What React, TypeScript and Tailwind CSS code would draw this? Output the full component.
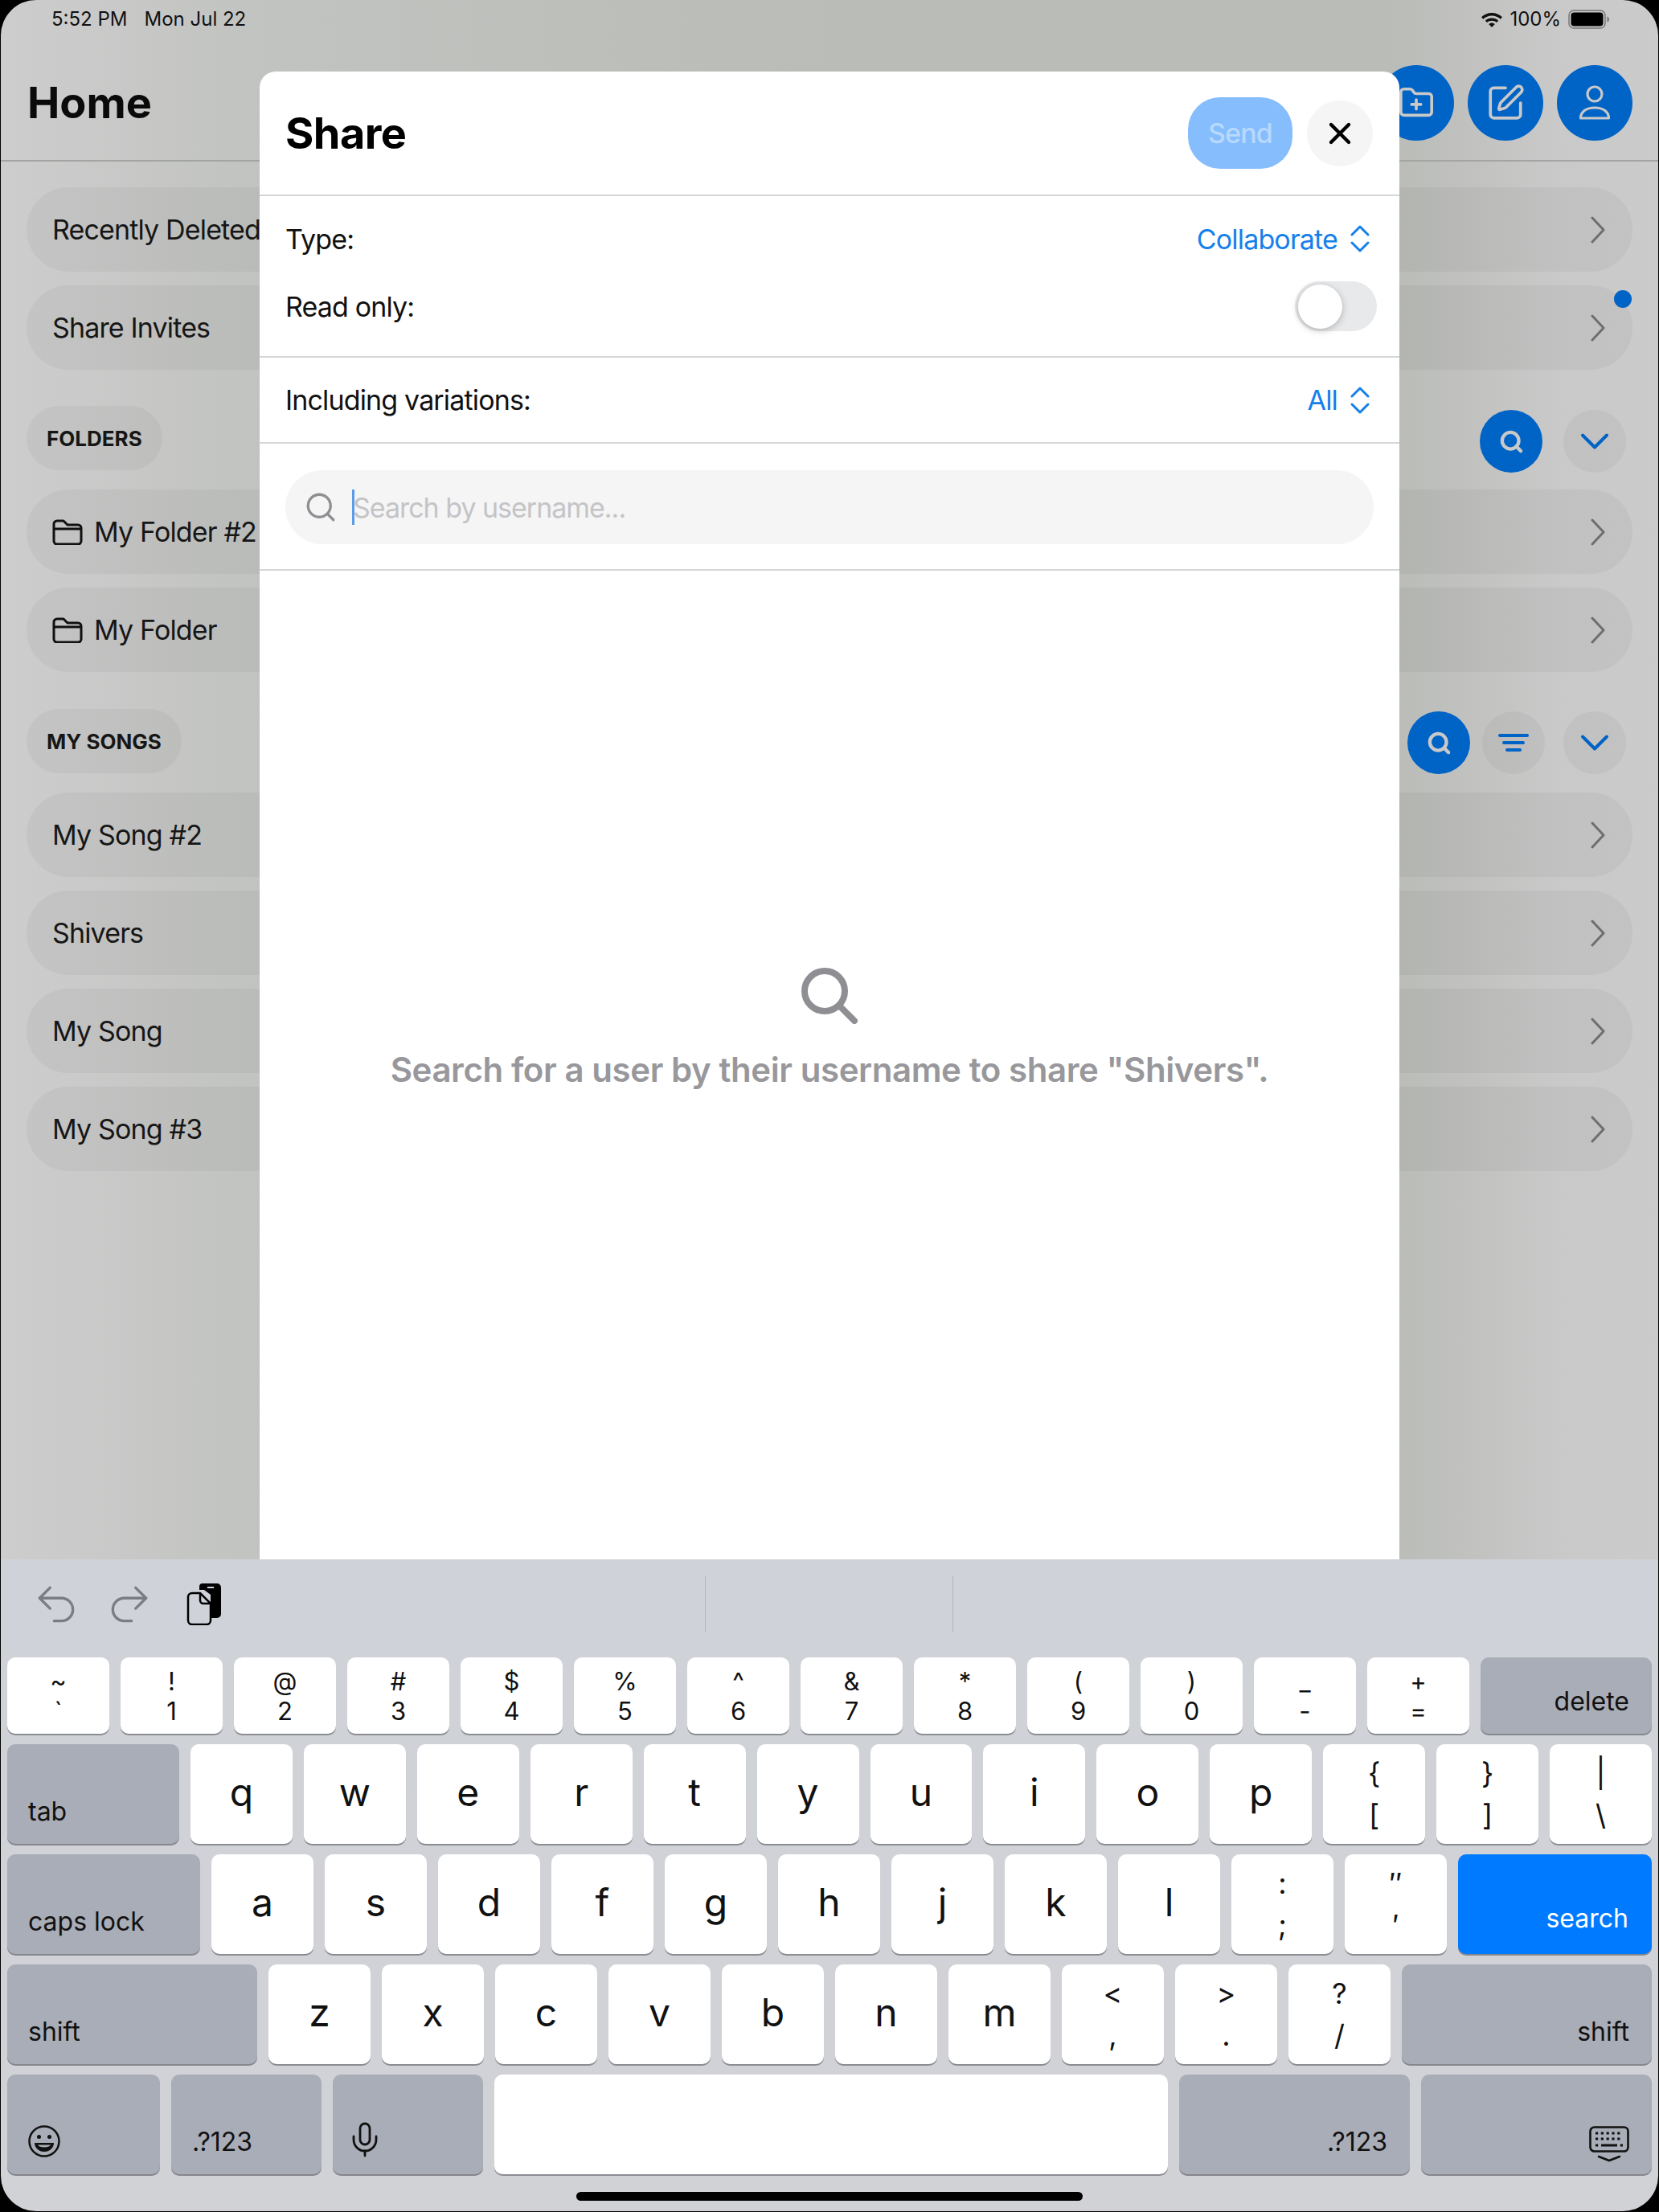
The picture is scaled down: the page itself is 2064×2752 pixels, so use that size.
import { ChevronDown, FolderPlus, Mic, Redo2, Search, SquarePen, Undo2, X } from "lucide-react";

type RowProps = { label: string; folder?: boolean; dot?: boolean };

const FolderIcon = () => (
  <svg width="38" height="32" viewBox="0 0 38 32" fill="none" stroke="#111" strokeWidth="3" strokeLinejoin="round" className="mr-[14px] shrink-0">
    <path d="M2 12V6a4 4 0 0 1 4-4h8l5 5h13a4 4 0 0 1 4 4v16a4 4 0 0 1-4 4H6a4 4 0 0 1-4-4z" />
    <path d="M2 12h34" />
  </svg>
);

const Row = ({ label, folder, dot }: RowProps) => (
  <div className="relative flex h-[105px] items-center rounded-[52px] bg-black/[0.04] pl-[32px] pr-[34px] text-[34px] tracking-[-0.025em] text-[#161616]">
    {folder && <FolderIcon />}
    <span>{label}</span>
    <svg width="18" height="42" viewBox="0 0 18 42" fill="none" stroke="#6e6e6e" strokeWidth="3" strokeLinecap="round" strokeLinejoin="round" className="ml-auto">
      <path d="M2 6l14 15L2 36" />
    </svg>
    {dot && <div className="absolute right-[1px] top-[6px] h-[22px] w-[22px] rounded-full bg-[#0063c6]" />}
  </div>
);

const SectionLabel = ({ label }: { label: string }) => (
  <div className="flex h-[80px] items-center rounded-[40px] bg-black/[0.04] px-[25px] text-[26px] font-bold text-[#161616]">
    {label}
  </div>
);

const BlueCircle = ({ size, children }: { size: "lg" | "sm"; children: React.ReactNode }) => (
  <div className={`flex items-center justify-center rounded-full bg-[#0063c6] ${size === "lg" ? "h-[94px] w-[94px]" : "h-[78px] w-[78px]"}`}>
    {children}
  </div>
);

const GrayCircle = ({ children }: { children: React.ReactNode }) => (
  <div className="flex h-[78px] w-[78px] items-center justify-center rounded-full bg-black/[0.04]">{children}</div>
);

const SmallSearch = () => <Search size={31} strokeWidth={3.3} className="text-[#c8c9c8]" />;
const BlueChevron = () => <ChevronDown size={60} strokeWidth={1.6} className="text-[#0063c6]" />;

const UpDown = () => (
  <svg width="24" height="34" viewBox="0 0 24 34" fill="none" stroke="#1680ea" strokeWidth="3" strokeLinecap="round" strokeLinejoin="round" className="ml-[16px]">
    <path d="M2 12 12 2l10 10" />
    <path d="M2 22l10 10 10-10" />
  </svg>
);

// keyboard
const Key = ({ top, bottom, large }: { top: string; bottom?: string; large?: boolean }) => (
  <div className="flex h-full flex-1 flex-col items-center justify-center rounded-[10px] bg-white text-[#111] shadow-[0_2px_0_#8b8d93]">
    {bottom ? (
      <div className={`flex flex-col items-center leading-none ${large ? "gap-[16px] text-[36px]" : "gap-[6px] text-[31px]"}`}>
        <span>{top}</span>
        <span>{bottom}</span>
      </div>
    ) : (
      <span className="pb-[4px] text-[48px] leading-none">{top}</span>
    )}
  </div>
);

const FnKey = ({ w, label, right, children }: { w: string; label?: string; right?: boolean; children?: React.ReactNode }) => (
  <div className={`flex h-full shrink-0 items-end rounded-[10px] bg-[#a9adb7] pb-[24px] text-[32px] leading-none text-[#111] shadow-[0_2px_0_#85878e] ${w} ${right ? "justify-end pr-[28px]" : "pl-[26px]"}`}>
    {label}
    {children}
  </div>
);

const row1: [string, string][] = [["~", "`"], ["!", "1"], ["@", "2"], ["#", "3"], ["$", "4"], ["%", "5"], ["^", "6"], ["&", "7"], ["*", "8"], ["(", "9"], [")", "0"], ["_", "-"], ["+", "="]];

export default function App() {
  return (
    <div className="h-[2752px] w-[2064px] overflow-hidden bg-black font-['Inter',sans-serif]">
      <div className="mx-[1px] flex h-[2751px] flex-col overflow-hidden rounded-[44px]">
        <div className="relative h-[1940px] shrink-0 bg-[linear-gradient(90deg,#cdcdcd_0%,#c1c3c0_16%,#babcb8_50%,#babcb8_84%,#c9c9c9_94%,#cbcbcb_100%)]">
          {/* status bar */}
          <div className="flex h-[48px] items-center pl-[63px] pr-[60px] text-[24px] text-[#111]">
            <span>5:52 PM</span>
            <span className="ml-[21px]">Mon Jul 22</span>
            <svg width="28" height="22" viewBox="0 0 28 22" fill="#111" className="ml-auto">
              <path d="M14 3c5 0 9.500 2 13 5.300l-2.200 2.400C22 8 18.200 6.400 14 6.400S6 8 3.200 10.700L1 8.300C4.500 5 9 3 14 3z" />
              <path d="M14 9.500c3.200 0 6 1.200 8.200 3.200L20 15c-1.600-1.500-3.700-2.300-6-2.300s-4.400.8-6 2.300l-2.200-2.300c2.200-2 5-3.200 8.200-3.200z" />
              <path d="M14 15.500c1.500 0 2.800.6 3.800 1.500L14 21l-3.800-4c1-.9 2.300-1.500 3.800-1.500z" />
            </svg>
            <span className="ml-[8px]">100%</span>
            <svg width="52" height="24" viewBox="0 0 52 24" className="ml-[9px]">
              <rect x="1" y="1" width="45" height="22" rx="6" fill="none" stroke="#777" strokeWidth="1.500" />
              <rect x="3.500" y="3.500" width="40" height="17" rx="4" fill="#000" />
              <path d="M48.500 8.500c1.500.5 2.500 2 2.500 3.500s-1 3-2.500 3.500z" fill="#777" />
            </svg>
          </div>

          {/* nav */}
          <div className="flex h-[153px] items-center justify-between border-b-[2px] border-[#a3a5a2] pl-[33px] pr-[32px] pt-[8px]">
            <h1 className="text-[54px] font-bold leading-none text-[#0a0a0a]">Home</h1>
            <div className="flex gap-[17px]">
              <BlueCircle size="lg"><FolderPlus size={46} strokeWidth={1.9} className="text-[#c8c9c8]" /></BlueCircle>
              <BlueCircle size="lg"><SquarePen size={50} strokeWidth={1.8} className="text-[#c8c9c8]" /></BlueCircle>
              <BlueCircle size="lg">
                <svg width="40" height="44" viewBox="0 0 40 44" fill="none" stroke="#c8c9c8" strokeWidth="3.200">
                  <circle cx="20" cy="11" r="9" />
                  <path d="M2.500 41c0-8 7-13 17.500-13s17.500 5 17.500 13z" strokeLinejoin="round" />
                </svg>
              </BlueCircle>
            </div>
          </div>

          {/* list */}
          <div className="flex flex-col px-[32px] pt-[32px]">
            <div className="flex flex-col gap-[17px]">
              <Row label="Recently Deleted" />
              <Row label="Share Invites" dot />
            </div>
            <div className="mt-[45px] flex h-[80px] items-start justify-between pr-[8px]">
              <SectionLabel label="FOLDERS" />
              <div className="mt-[5px] flex gap-[26px]">
                <BlueCircle size="sm"><SmallSearch /></BlueCircle>
                <GrayCircle><BlueChevron /></GrayCircle>
              </div>
            </div>
            <div className="mt-[24px] flex flex-col gap-[17px]">
              <Row label="My Folder #2" folder />
              <Row label="My Folder" folder />
            </div>
            <div className="mt-[46px] flex h-[80px] items-start justify-between pr-[8px]">
              <SectionLabel label="MY SONGS" />
              <div className="mt-[3px] flex">
                <BlueCircle size="sm"><SmallSearch /></BlueCircle>
                <div className="ml-[15px] mr-[23px]">
                  <GrayCircle>
                    <svg width="38" height="24" viewBox="0 0 38 24" fill="none" stroke="#0063c6" strokeWidth="4" strokeLinecap="round">
                      <path d="M2 3h34M7 12h24M11 21h16" />
                    </svg>
                  </GrayCircle>
                </div>
                <GrayCircle><BlueChevron /></GrayCircle>
              </div>
            </div>
            <div className="mt-[24px] flex flex-col gap-[17px]">
              <Row label="My Song #2" />
              <Row label="Shivers" />
              <Row label="My Song" />
              <Row label="My Song #3" />
            </div>
          </div>

          {/* share sheet */}
          <div className="absolute bottom-0 left-[322px] top-[89px] flex w-[1418px] flex-col rounded-t-[20px] bg-white text-[#111]">
            <div className="flex h-[155px] shrink-0 items-center border-b-[2px] border-[#d6d6d8] pl-[32px] pr-[33px]">
              <h2 className="text-[54px] font-bold leading-none tracking-[-0.01em] text-black">Share</h2>
              <div className="ml-auto flex h-[89px] w-[130px] items-center justify-center rounded-[40px] bg-[#86bdfd] text-[34px] font-medium tracking-[-0.025em] text-[#b8d9fe]">Send</div>
              <div className="ml-[18px] flex h-[82px] w-[82px] items-center justify-center rounded-full bg-[#f5f5f5]">
                <X size={44} strokeWidth={2.4} className="text-black" />
              </div>
            </div>

            <div className="flex h-[201px] shrink-0 flex-col border-b-[2px] border-[#d6d6d8] pl-[32px] pr-[28px] text-[34px] tracking-[-0.025em]">
              <div className="flex h-[106px] items-center justify-between pr-[9px]">
                <span>Type:</span>
                <div className="flex items-center text-[#1680ea]">Collaborate<UpDown /></div>
              </div>
              <div className="flex h-[62px] items-center justify-between">
                <span>Read only:</span>
                <div className="flex h-[62px] w-[102px] items-center rounded-full bg-[#e8e9eb] pl-[4px]">
                  <div className="h-[55px] w-[55px] rounded-full bg-white shadow-[0_2px_8px_rgba(0,0,0,0.25)]" />
                </div>
              </div>
            </div>

            <div className="flex h-[107px] shrink-0 items-center justify-between border-b-[2px] border-[#d6d6d8] pl-[32px] pr-[37px] text-[34px] tracking-[-0.025em]">
              <span>Including variations:</span>
              <div className="flex items-center text-[#1680ea]">All<UpDown /></div>
            </div>

            <div className="h-[158px] shrink-0 border-b-[2px] border-[#d6d6d8] px-[32px] pt-[33px]">
              <div className="flex h-[92px] items-center rounded-[46px] bg-[#f5f5f5] pl-[23px] text-[34px] tracking-[-0.03em] text-[#c4c4c7]">
                <Search size={42} strokeWidth={1.9} className="shrink-0 text-[#8e8e93]" />
                <div className="ml-[18px] h-[44px] w-[3px] bg-[#5a9ce8]" />
                <span className="-ml-[2px]">Search by username...</span>
              </div>
            </div>

            <div className="flex flex-1 flex-col items-center pt-[494px]">
              <svg width="70" height="70" viewBox="0 0 70 70" fill="none" stroke="#8e8e93" strokeWidth="8" strokeLinecap="round">
                <circle cx="29" cy="29" r="25" />
                <path d="M47 47l19 19" />
              </svg>
              <div className="mt-[36px] text-[42px] font-semibold leading-none tracking-[-0.01em] text-[#98989c]">Search for a user by their username to share "Shivers".</div>
            </div>
          </div>
        </div>

        {/* keyboard */}
        <div className="flex-1 bg-[linear-gradient(180deg,#cfd2d8_0%,#d1d2d6_100%)]">
          <div className="flex h-[122px] items-center pb-[10px] pl-[38px]">
            <Undo2 size={62} strokeWidth={1.3} className="text-[#7b7d82]" />
            <Redo2 size={62} strokeWidth={1.3} className="ml-[29px] text-[#7b7d82]" />
            <svg width="44" height="52" viewBox="0 0 44 52" className="ml-[40px]">
              <path d="M16 4a4 4 0 0 1 4-4h18a5 5 0 0 1 5 5v33a5 5 0 0 1-5 5H30V14l-8-6H16z" fill="#000" />
              <path d="M2 17a5 5 0 0 1 5-5h10l13 13v21a5 5 0 0 1-5 5H7a5 5 0 0 1-5-5z" fill="#cfd2d8" stroke="#000" strokeWidth="2.500" strokeLinejoin="round" />
              <path d="M17 12v9a4 4 0 0 0 4 4h9" fill="none" stroke="#000" strokeWidth="2.500" />
              <path d="M26 5h8" stroke="#cfd2d8" strokeWidth="2" />
            </svg>
            <div className="ml-[601px] h-[70px] w-px bg-[#b3b5bb]" />
            <div className="ml-[307px] h-[70px] w-px bg-[#b3b5bb]" />
          </div>
          <div className="flex flex-col gap-[13px] pl-[8px] pr-[8px]">
            <div className="flex h-[95px] gap-[14px]">
              {row1.map(([t, b]) => <Key key={t} top={t} bottom={b} />)}
              <FnKey w="w-[213px]" label="delete" right />
            </div>
            <div className="flex h-[124px] gap-[14px]">
              <FnKey w="w-[214px]" label="tab" />
              {"qwertyuiop".split("").map((c) => <Key key={c} top={c} />)}
              <Key top="{" bottom="[" large />
              <Key top="}" bottom="]" large />
              <Key top="|" bottom="\" large />
            </div>
            <div className="flex h-[124px] gap-[14px]">
              <FnKey w="w-[240px]" label="caps lock" />
              {"asdfghjkl".split("").map((c) => <Key key={c} top={c} />)}
              <Key top=":" bottom=";" large />
              <Key top="″" bottom="′" large />
              <div className="flex h-full w-[241px] shrink-0 items-end justify-end rounded-[10px] bg-[#007aff] pb-[28px] pr-[29px] text-[32px] leading-none text-white shadow-[0_2px_0_#85878e]">search</div>
            </div>
            <div className="flex h-[124px] gap-[14px]">
              <FnKey w="w-[311px]" label="shift" />
              {"zxcvbnm".split("").map((c) => <Key key={c} top={c} />)}
              <Key top="<" bottom="," large />
              <Key top=">" bottom="." large />
              <Key top="?" bottom="/" large />
              <FnKey w="w-[311px]" label="shift" right />
            </div>
            <div className="flex h-[124px] gap-[14px]">
              <FnKey w="w-[190px]">
                <svg width="40" height="40" viewBox="0 0 40 40" fill="none" stroke="#111" strokeWidth="2.500" className="-mb-[3px]">
                  <circle cx="20" cy="20" r="18.500" />
                  <circle cx="13.500" cy="14.500" r="2.500" fill="#111" stroke="none" />
                  <circle cx="26.500" cy="14.500" r="2.500" fill="#111" stroke="none" />
                  <path d="M8 22h24c0 6-5 11-12 11S8 28 8 22z" fill="#111" stroke="none" />
                  <path d="M12 24.500h16c-1 2-4 3-8 3s-7-1-8-3z" fill="#a9adb7" stroke="none" />
                </svg>
              </FnKey>
              <FnKey w="w-[187px]" label=".?123" />
              <FnKey w="w-[187px]"><Mic size={48} strokeWidth={1.4} className="-mb-[5px] -ml-[10px]" /></FnKey>
              <div className="h-full flex-1 rounded-[10px] bg-white shadow-[0_2px_0_#8b8d93]" />
              <FnKey w="w-[287px]" label=".?123" right />
              <FnKey w="w-[287px]" right>
                <svg width="50" height="46" viewBox="0 0 50 46" fill="none" stroke="#111" className="-mb-[10px]">
                  <rect x="1.500" y="1.500" width="47" height="30" rx="5" strokeWidth="2.600" />
                  <path d="M8 9h34M8 16h34" strokeWidth="3.200" strokeDasharray="3.200 3.600" />
                  <path d="M15 24h20" strokeWidth="3.200" />
                  <path d="M8 24h3.200M38.800 24H42" strokeWidth="3.200" />
                  <path d="M12 38l13 5 13-5" strokeWidth="2.600" strokeLinecap="round" />
                </svg>
              </FnKey>
            </div>
          </div>
          <div className="mx-auto mt-[22px] h-[11px] w-[630px] rounded-full bg-black" />
        </div>
      </div>
    </div>
  );
}
